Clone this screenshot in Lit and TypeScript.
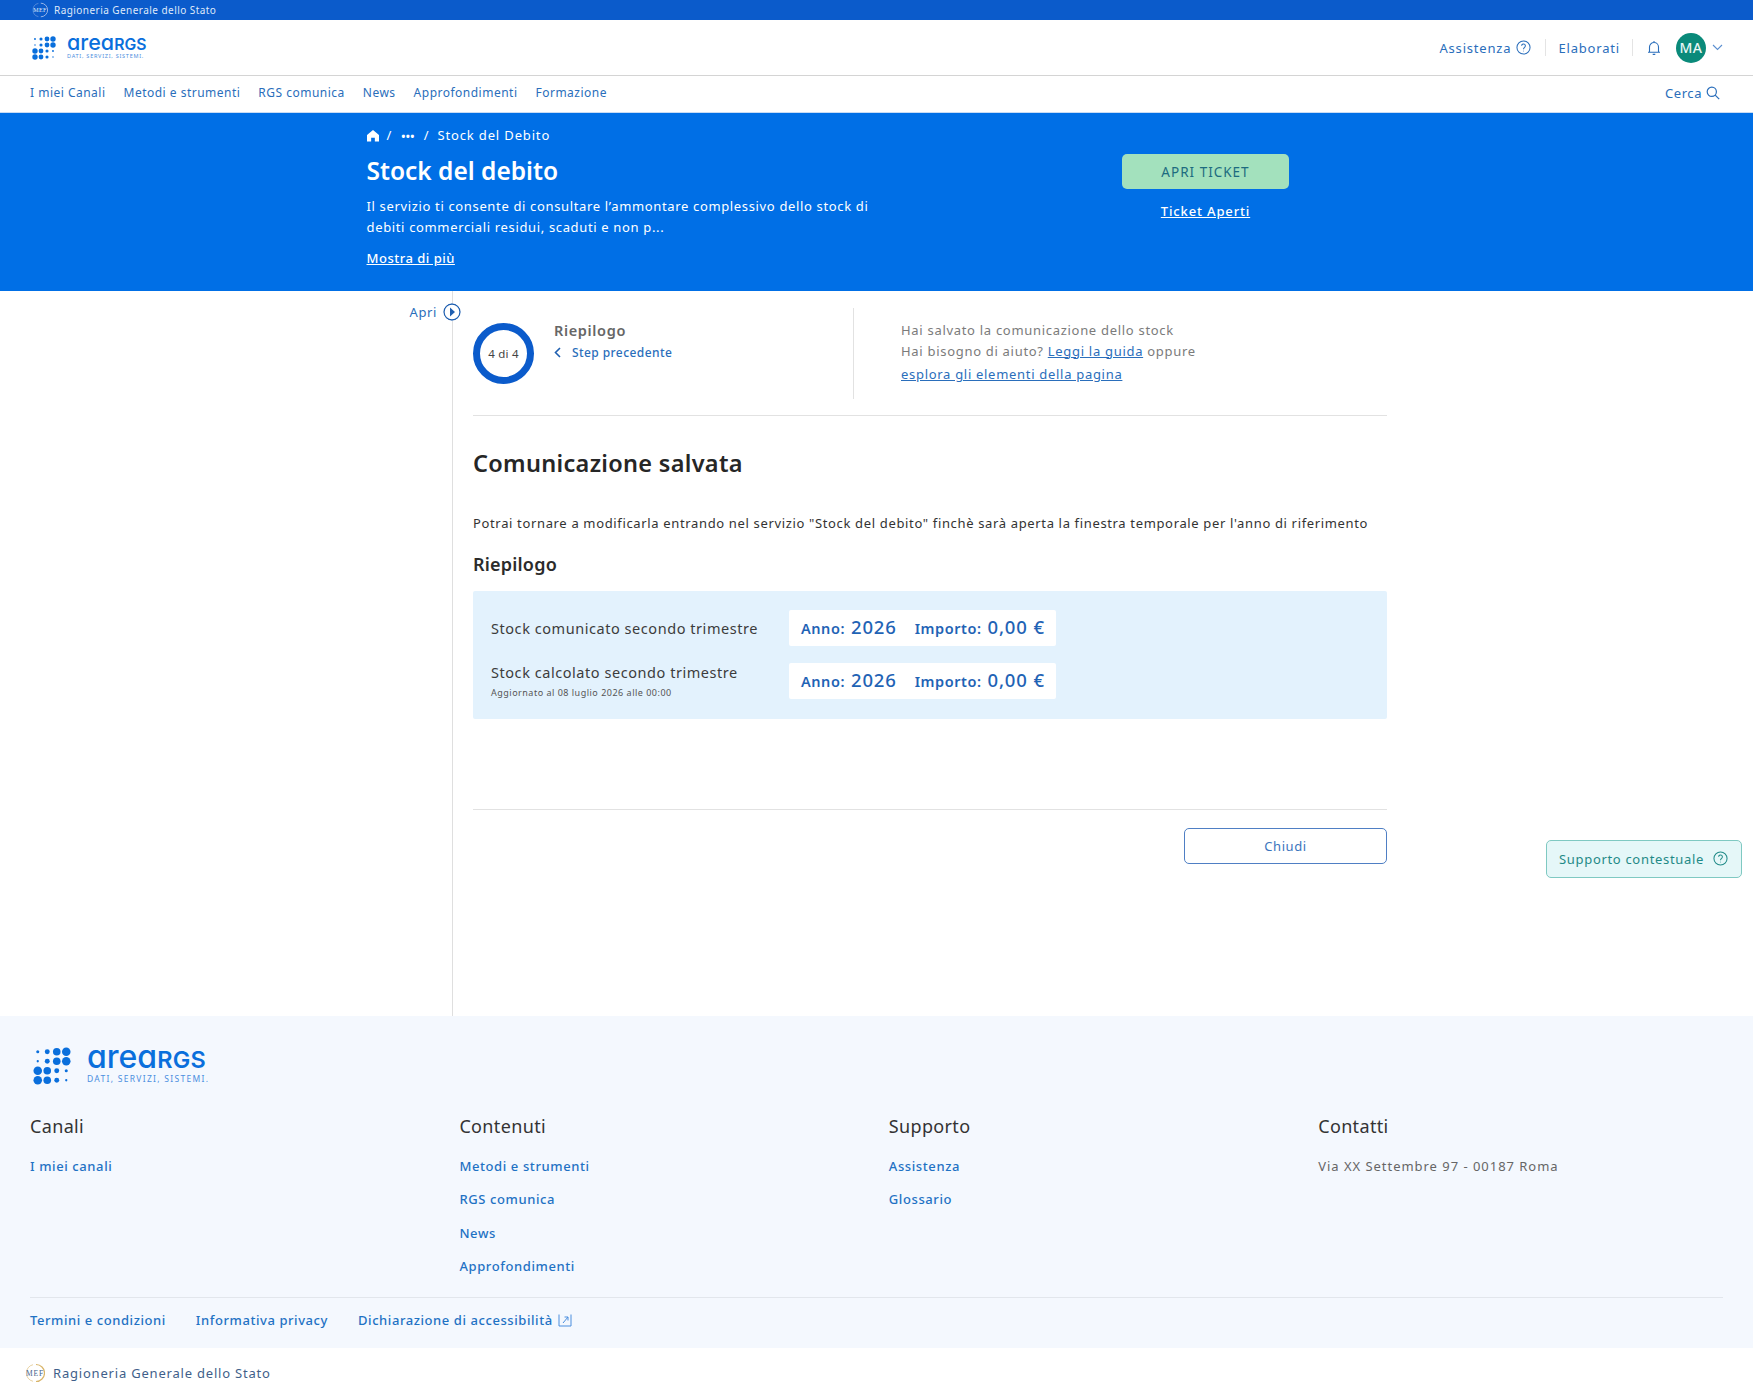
import { LitElement, html, css, svg } from "lit";
import { customElement } from "lit/decorators.js";

const dots = (s: number) => {
  const r = [
    [0.16, 0.26, 0.4, 0.45],
    [0.12, 0.26, 0.4, 0.45],
    [0.45, 0.4, 0.26, 0.16],
    [0.45, 0.4, 0.26, 0.12],
  ];
  return html`<svg class="dots" width=${s} height=${s} viewBox="0 0 4 4" fill="#0a6fdc">
    ${r.map((row, y) => row.map((v, x) => svg`<circle cx=${x + 0.5} cy=${y + 0.5} r=${v}></circle>`))}
  </svg>`;
};

const help = (s: number) => html`<svg width=${s} height=${s} viewBox="0 0 16 16" fill="none" stroke="currentColor" stroke-width="1.1">
  <circle cx="8" cy="8" r="7"></circle>
  <path d="M6 6.2a2 2 0 1 1 3.2 1.6C8.4 8.4 8 8.8 8 9.8"></path>
  <circle cx="8" cy="11.8" r=".5" fill="currentColor" stroke="none"></circle>
</svg>`;

const mef = (c: string, ring: string, s = 20) => html`<svg width=${s} height=${s} viewBox="0 0 20 20" fill="none">
  <path d="M11 1.5a8.5 8.5 0 0 1 0 17" stroke=${ring} stroke-width="1.2"></path>
  <path d="M8 1.7A8.5 8.5 0 0 0 8 18.3" stroke=${ring} stroke-width=".6"></path>
  <text x="10" y="13" font-size="7.5" text-anchor="middle" font-family="Liberation Serif, serif" fill=${c}>MEF</text>
</svg>`;

@customElement("app-root")
export class AppRoot extends LitElement {
  static styles = css`
    :host { display: block; font-family: "Noto Sans", "Open Sans", sans-serif; color: #2b2b2b; position: relative; }
    a { color: inherit; text-decoration: none; }
    .top { height: 20px; background: #0b5bcb; color: #dfe9fa; display: flex; align-items: center; padding-left: 32px; gap: 6px; font-size: 10px; letter-spacing: .45px; }
    .head { height: 55px; border-bottom: 1px solid #d4d4d4; display: flex; align-items: center; padding: 0 30px 0 32px; }
    .logo { display: flex; align-items: center; color: #0a6fdc; }
    .logo .txt { display: block; }
    .logo .name { font-family: "Inter", sans-serif; font-weight: 500; font-feature-settings: "cv11" 1; line-height: .85; display: block; white-space: nowrap; }
    .logo .name i { font-style: normal; font-weight: 600; }
    .logo .sub { display: block; color: #4b8ede; white-space: nowrap; line-height: 1.2; }
    .logo.small { gap: 11px; }
    .logo.small .txt { margin-top: -3px; }
    .logo.small .name { font-size: 21.5px; letter-spacing: 0; }
    .logo.small .name i { font-size: 15.7px; letter-spacing: .1px; }
    .logo.small .sub { font-size: 5.5px; margin-top: 2px; letter-spacing: .75px; }
    .logo.big { gap: 16px; margin-top: -2px; }
    .logo.big .txt { margin-top: -5px; }
    .logo.big .name { font-size: 32px; letter-spacing: 0; }
    .logo.big .name i { font-size: 23.4px; letter-spacing: .3px; }
    .logo.big .sub { font-size: 8.5px; letter-spacing: 1.3px; margin-top: 4px; }
    .dots { display: block; flex: none; }
    .spacer { flex: 1; }
    .tools { display: flex; align-items: center; color: #2a6ebb; font-size: 13px; letter-spacing: .82px; }
    .tools .item { display: flex; align-items: center; gap: 5px; }
    .tools .sep { width: 1px; height: 17px; background: #e4e4e4; margin: 0 12px 0 14px; }
    .tools .sep.wide { margin: 0 14px 0 12px; }
    .avatar { width: 30px; height: 30px; border-radius: 50%; background: #0a8a7a; color: #e8f6f4; font-size: 14px; letter-spacing: .4px; display: flex; align-items: center; justify-content: center; margin: 0 6px 0 15px; font-weight: 500; }
    .nav { height: 37px; border-bottom: 1px solid #c8dcf5; display: flex; align-items: center; padding: 0 33px 3px 30px; box-sizing: border-box; gap: 18px; color: #2a6ebb; font-size: 12px; letter-spacing: .49px; }
    .nav .cerca { margin-left: auto; display: flex; align-items: center; gap: 4px; font-size: 13px; letter-spacing: .55px; }
    .hero { height: 178px; background: #006fe6; color: #fff; box-sizing: border-box; padding: 13px 0 0 366.5px; display: grid; grid-template-columns: 755.5px 167px; }
    .crumbs { display: flex; align-items: center; gap: 8px; font-size: 13px; letter-spacing: .85px; height: 18px; }
    .crumbs .more-dots { font-weight: 700; font-size: 11px; letter-spacing: .4px; margin: 0 1px; }
    .hero h1 { margin: 11px 0 0; font-size: 24.5px; line-height: 32px; font-weight: 600; letter-spacing: 0; }
    .hero p { margin: 9px 0 0; width: 520px; font-size: 13px; line-height: 20.5px; letter-spacing: .65px; }
    .more { display: inline-block; margin-top: 12px; font-size: 13px; letter-spacing: .5px; text-decoration: underline; font-weight: 500; }
    .cta { padding-top: 28px; text-align: center; }
    .cta .btn { height: 35px; background: #a3e1bd; color: #1d6b80; border-radius: 5px; display: flex; align-items: center; justify-content: center; font-size: 13.5px; letter-spacing: 1px; }
    .cta a { display: inline-block; margin-top: 13px; text-decoration: underline; font-size: 13px; letter-spacing: .85px; font-weight: 500; }
    .body { display: flex; height: 725px; }
    .side { width: 452px; flex: none; border-right: 1px solid #dfdfdf; box-sizing: content-box; position: relative; }
    .apri { position: absolute; right: -9px; top: 12px; display: flex; align-items: center; gap: 6px; font-size: 13px; letter-spacing: .6px; color: #2a6ebb; }
    .apri svg { background: #fff; border-radius: 50%; }
    .main { width: 914px; margin-left: 20px; }
    .steps { display: flex; height: 91px; margin-top: 17px; padding-bottom: 16px; border-bottom: 1px solid #e2e2e2; }
    .stepl { width: 380px; flex: none; border-right: 1px solid #e2e2e2; display: flex; gap: 20px; }
    .ring { width: 61px; height: 61px; box-sizing: border-box; border: 7px solid #0b5bcb; border-radius: 50%; display: flex; align-items: center; justify-content: center; font-size: 11.5px; color: #444; letter-spacing: .2px; margin-top: 15px; flex: none; }
    .stepl .t { font-size: 14.5px; font-weight: 600; color: #666; margin-top: 12px; letter-spacing: .65px; line-height: 20px; }
    .stepl .b { display: flex; align-items: center; gap: 11px; color: #2a6ebb; font-size: 12px; font-weight: 500; margin-top: 4px; letter-spacing: .42px; }
    .stepr { padding: 12px 0 0 47px; font-size: 13px; line-height: 20.5px; letter-spacing: .7px; color: #7b7b7b; }
    .stepr a { color: #2a6ebb; text-decoration: underline; }
    .stepr .l { margin-top: 3px; }
    h2 { margin: 31px 0 0; font-size: 23.5px; line-height: 32px; font-weight: 600; color: #262626; letter-spacing: .3px; }
    .lead { margin: 35px 0 0; font-size: 13px; line-height: 18px; letter-spacing: .65px; color: #333; white-space: nowrap; }
    h3 { margin: 20px 0 0; font-size: 18px; line-height: 24px; font-weight: 600; color: #2b2b2b; letter-spacing: .2px; }
    .box { margin-top: 15px; height: 128px; box-sizing: border-box; background: #e3f2fd; border-radius: 2px; padding: 19px 18px 0; display: grid; grid-template-columns: 298px 267px; grid-template-rows: 36px 36px; row-gap: 17px; align-items: center; }
    .lab { font-size: 14.5px; letter-spacing: .55px; color: #3c3c3c; line-height: 19px; white-space: nowrap; }
    .lab small { display: block; font-size: 9px; letter-spacing: .5px; color: #555; margin-top: 5px; line-height: 12px; }
    .pill { height: 36px; box-sizing: border-box; padding: 0 12px 3px; background: #fff; border-radius: 2px; display: flex; align-items: center; color: #1f63b5; font-size: 14.5px; font-weight: 600; gap: 18px; letter-spacing: .55px; white-space: nowrap; }
    .pill b { font-size: 18.5px; font-weight: 500; letter-spacing: .85px; margin-left: 6px; }
    .rule { margin-top: 90px; border-top: 1px solid #e2e2e2; }
    .acts { display: flex; justify-content: flex-end; margin-top: 18px; }
    .chiudi { width: 203px; height: 36px; box-sizing: border-box; border: 1.5px solid #4f7fc4; border-radius: 5px; color: #3b74bd; display: flex; align-items: center; justify-content: center; font-size: 13px; letter-spacing: .6px; }
    .float { position: absolute; left: 1546px; top: 840px; width: 196px; height: 38px; box-sizing: border-box; background: #e5f7f8; border: 1px solid #7fc9c2; border-radius: 5px; display: flex; align-items: center; padding: 0 0 1px 12px; gap: 9px; font-size: 13px; letter-spacing: .68px; color: #1f8a87; }
    .foot { background: #f4f8fe; height: 332px; box-sizing: border-box; padding: 33px 30px 0; }
    .foot .logo { padding-left: 3px; }
    .cols { display: grid; grid-template-columns: repeat(4, 429.4px); margin: 28px 0 7px; }
    .cols h4 { margin: 0 0 18px; font-size: 18px; line-height: 26px; font-weight: 400; color: #333; letter-spacing: .35px; }
    .cols a, .cols span { display: block; font-size: 13px; line-height: 18px; margin-bottom: 15.3px; color: #1f72c4; font-weight: 500; letter-spacing: .6px; }
    .cols span { color: #666; font-weight: 400; letter-spacing: .97px; }
    .legal { position: relative; border-top: 1px solid #e2e6ec; padding-top: 13px; margin-top: 0; display: flex; gap: 30px; font-size: 13px; line-height: 18px; color: #1f72c4; font-weight: 500; letter-spacing: .57px; }
    .legal a { display: flex; align-items: center; gap: 5px; }
    .bot { height: 50px; display: flex; align-items: center; padding-left: 25px; gap: 8px; font-size: 13px; color: #3f5f8a; letter-spacing: .8px; }
  `;

  render() {
    const logo = (cls: string, s: number) => html`<div class="logo ${cls}">${dots(s)}<div class="txt"><span class="name">area<i>RGS</i></span><span class="sub">DATI, SERVIZI, SISTEMI.</span></div></div>`;
    return html`
      <div class="top">${mef("#dfe9fa", "#9cb8e8", 16)}<span>Ragioneria Generale dello Stato</span></div>
      <div class="head">
        ${logo("small", 24)}
        <div class="spacer"></div>
        <div class="tools">
          <span class="item">Assistenza ${help(15)}</span><span class="sep"></span>
          <span class="item">Elaborati</span><span class="sep wide"></span>
          <svg width="14" height="16" viewBox="0 0 14 16" fill="none" stroke="#2a6ebb" stroke-width="1.1"><path d="M2.5 12V7a4.5 4.5 0 0 1 9 0v5M1 12.3h12M7 1v1.4M5.7 14.4h2.6"></path></svg>
          <span class="avatar">MA</span>
          <svg width="11" height="7" viewBox="0 0 11 7" fill="none" stroke="#5b8fd0" stroke-width="1.1"><path d="M1 1l4.5 4.5L10 1"></path></svg>
        </div>
      </div>
      <div class="nav">
        <a>I miei Canali</a><a>Metodi e strumenti</a><a>RGS comunica</a><a>News</a><a>Approfondimenti</a><a>Formazione</a>
        <span class="cerca">Cerca <svg width="14" height="14" viewBox="0 0 14 14" fill="none" stroke="#2a6ebb" stroke-width="1.2"><circle cx="5.8" cy="5.8" r="4.6"></circle><path d="M9.2 9.2l4 4"></path></svg></span>
      </div>
      <section class="hero">
        <div>
          <div class="crumbs">
            <svg width="12" height="13" viewBox="0 0 13 13" fill="#fff"><path d="M6.5 .5L13 6v7H8.5V9h-4v4H0V6z"></path></svg>
            <span>/</span><span class="more-dots">•••</span><span>/</span><span>Stock del Debito</span>
          </div>
          <h1>Stock del debito</h1>
          <p>Il servizio ti consente di consultare l’ammontare complessivo dello stock di debiti commerciali residui, scaduti e non p...</p>
          <a class="more">Mostra di più</a>
        </div>
        <div class="cta"><div class="btn">APRI TICKET</div><a>Ticket Aperti</a></div>
      </section>
      <div class="body">
        <aside class="side">
          <div class="apri">Apri
            <svg width="18" height="18" viewBox="0 0 18 18" fill="none"><circle cx="9" cy="9" r="8" stroke="#1f5fb0" stroke-width="1.3"></circle><path d="M7 4.5L12 9l-5 4.5z" fill="#1f5fb0"></path></svg>
          </div>
        </aside>
        <main class="main">
          <div class="steps">
            <div class="stepl">
              <div class="ring">4 di 4</div>
              <div>
                <div class="t">Riepilogo</div>
                <div class="b"><svg width="7" height="11" viewBox="0 0 7 11" fill="none" stroke="#1f5fb0" stroke-width="1.6"><path d="M6 1L1.5 5.5 6 10"></path></svg>Step precedente</div>
              </div>
            </div>
            <div class="stepr">
              <div>Hai salvato la comunicazione dello stock</div>
              <div>Hai bisogno di aiuto? <a>Leggi la guida</a> oppure</div>
              <div class="l"><a>esplora gli elementi della pagina</a></div>
            </div>
          </div>
          <h2>Comunicazione salvata</h2>
          <p class="lead">Potrai tornare a modificarla entrando nel servizio "Stock del debito" finchè sarà aperta la finestra temporale per l'anno di riferimento</p>
          <h3>Riepilogo</h3>
          <div class="box">
            <div class="lab">Stock comunicato secondo trimestre</div>
            <div class="pill"><span>Anno:<b>2026</b></span><span>Importo:<b>0,00 €</b></span></div>
            <div class="lab">Stock calcolato secondo trimestre<small>Aggiornato al 08 luglio 2026 alle 00:00</small></div>
            <div class="pill"><span>Anno:<b>2026</b></span><span>Importo:<b>0,00 €</b></span></div>
          </div>
          <div class="rule"></div>
          <div class="acts"><div class="chiudi">Chiudi</div></div>
        </main>
      </div>
      <footer class="foot">
        ${logo("big", 38)}
        <div class="cols">
          <div><h4>Canali</h4><a>I miei canali</a></div>
          <div><h4>Contenuti</h4><a>Metodi e strumenti</a><a>RGS comunica</a><a>News</a><a>Approfondimenti</a></div>
          <div><h4>Supporto</h4><a>Assistenza</a><a>Glossario</a></div>
          <div><h4>Contatti</h4><span>Via XX Settembre 97 - 00187 Roma</span></div>
        </div>
        <div class="legal">
          <a>Termini e condizioni</a><a>Informativa privacy</a>
          <a>Dichiarazione di accessibilità <svg width="14" height="14" viewBox="0 0 14 14" fill="none" stroke="#4b8ede" stroke-width="1"><path d="M1 1.5v11.5h12V1.5M5 10l5-6M6.5 4H10v3.5"></path></svg></a>
        </div>
      </footer>
      <div class="bot">${mef("#3f5f8a", "#d9b56a")}<span>Ragioneria Generale dello Stato</span></div>
      <div class="float">Supporto contestuale ${help(15)}</div>
    `;
  }
}
